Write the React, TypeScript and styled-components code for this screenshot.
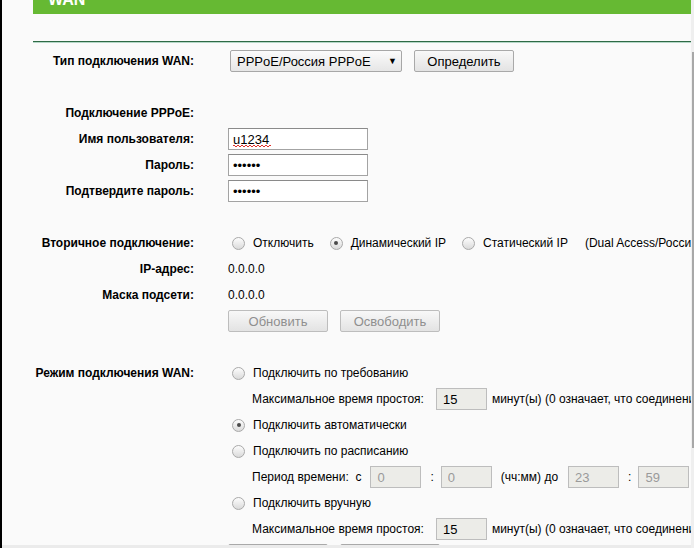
import React from 'react'
import styled, { createGlobalStyle } from 'styled-components'

const GlobalStyle = createGlobalStyle`
  html, body {
    margin: 0;
    padding: 0;
    background: #fafafa;
  }
  body {
    font-family: "Liberation Sans", Arial, sans-serif;
    color: #000;
  }
`

const Frame = styled.div`
  display: flex;
  width: 694px;
  height: 548px;
  overflow: hidden;
  background: #fafafa;
`
const LeftEdge = styled.div`
  width: 2px;
  background: #000;
`
const Main = styled.div`
  flex: 1;
  min-width: 0;
  display: flex;
  flex-direction: column;
`
const Content = styled.div`
  flex: 1;
  min-height: 0;
  overflow: hidden;
  padding-left: 31px;
`
const HScroll = styled.div`
  height: 3px;
  background: #ebebeb;
`
const VScroll = styled.div`
  width: 3px;
  display: flex;
  flex-direction: column;
  background: #efefef;
  padding-top: 52px;
  padding-bottom: 100px;
`
const Thumb = styled.div`
  flex: 1;
  margin-left: 1px;
  background: #a8a8a8;
`
const Header = styled.div`
  height: 14px;
  overflow: hidden;
  background: #66b933;
  padding-left: 15px;
`
const HeaderTitle = styled.div`
  color: #fff;
  font-weight: bold;
  font-size: 16px;
  line-height: 16px;
  margin-top: -8px;
`
const Divider = styled.div`
  margin-top: 27px;
  height: 1px;
  background: #2f6a45;
  border-bottom: 1px solid #b4d7c7;
  margin-bottom: 5px;
`
const Row = styled.div`
  display: grid;
  grid-template-columns: 161px minmax(0, 1fr);
  column-gap: 34px;
  height: 26px;
  align-items: center;
`
const Label = styled.div`
  text-align: right;
  font-weight: bold;
  font-size: 12px;
  white-space: nowrap;
`
const Cell = styled.div<{ $indent?: number }>`
  display: flex;
  align-items: center;
  white-space: nowrap;
  font-size: 12px;
  padding-left: ${p => p.$indent || 0}px;
`
const Option = styled.label<{ $gap?: number }>`
  display: inline-flex;
  align-items: center;
  gap: 8px;
  margin-right: ${p => (p.$gap === undefined ? 16 : p.$gap)}px;
`
const Radio = styled.span<{ $checked?: boolean; $first?: boolean }>`
  display: inline-flex;
  align-items: center;
  justify-content: center;
  box-sizing: border-box;
  width: 13px;
  height: 13px;
  margin-left: ${p => (p.$first ? 4 : 0)}px;
  border-radius: 50%;
  border: 1px solid #a9a9a9;
  background: linear-gradient(#fdfdfd, #dadada);

  &::after {
    content: '';
    display: ${p => (p.$checked ? 'block' : 'none')};
    width: 4px;
    height: 4px;
    border-radius: 50%;
    background: #4a4a4a;
  }
`
const Select = styled.div`
  display: flex;
  align-items: center;
  justify-content: space-between;
  box-sizing: border-box;
  width: 172px;
  height: 22px;
  margin-left: 2px;
  padding: 0 4px 0 6px;
  font-size: 13px;
  border: 1px solid #a7a7a7;
  border-radius: 2px;
  background: linear-gradient(#fbfbfb, #e6e6e6);
`
const Arrow = styled.span`
  font-size: 9px;
`
const Button = styled.button<{ $muted?: boolean }>`
  box-sizing: border-box;
  width: 100px;
  height: 22px;
  padding: 0;
  font-family: "Liberation Sans", Arial, sans-serif;
  font-size: 13px;
  color: ${p => (p.$muted ? '#8f8f8f' : '#000')};
  border: 1px solid ${p => (p.$muted ? '#bdbdbd' : '#a9a9a9')};
  border-radius: 2px;
  background: linear-gradient(#f8f8f8, #e3e3e3);
`
const ButtonGroup = styled.div`
  display: flex;
  gap: 12px;
  align-items: center;
`
// the red dotted zig-zag stands in for the browser's spell-check mark under "u1234"
const TextInput = styled.input<{ $squiggle?: boolean }>`
  box-sizing: border-box;
  width: 140px;
  height: 22px;
  padding: 0 4px;
  font-family: "Liberation Sans", Arial, sans-serif;
  font-size: 13px;
  color: #000;
  border: 1px solid #a3a3a3;
  border-top-color: #8a8a8a;
  outline: none;
  background-color: #fff;
  background-image: ${p =>
    p.$squiggle
      ? 'repeating-linear-gradient(90deg, #e0302a 0 2px, transparent 2px 4px), repeating-linear-gradient(90deg, transparent 0 2px, #e0302a 2px 4px)'
      : 'none'};
  background-repeat: no-repeat;
  background-size: 38px 1px, 38px 1px;
  background-position: 4px 16px, 4px 17px;
`
const SmallInput = styled.input<{ $dim?: boolean }>`
  box-sizing: border-box;
  width: 51px;
  height: 22px;
  padding: 0 6px;
  font-family: "Liberation Sans", Arial, sans-serif;
  font-size: 13px;
  color: ${p => (p.$dim ? '#9a9a9a' : '#000')};
  background: #ecece8;
  border: 1px solid #bdbdbd;
  outline: none;
`
const Sep = styled.span<{ $left: number; $right: number }>`
  margin: 0 ${p => p.$right}px 0 ${p => p.$left}px;
`

const IdleRow = () => (
  <Row>
    <Label />
    <Cell $indent={24}>
      Максимальное время простоя:
      <Sep $left={12} $right={0} />
      <SmallInput defaultValue='15' />
      <Sep $left={5} $right={0} />
      минут(ы) (0 означает, что соединение активно всегда)
    </Cell>
  </Row>
)

export default function App () {
  return (
    <>
      <GlobalStyle />
      <Frame>
        <LeftEdge />
        <Main>
          <Content>
            <Header>
              <HeaderTitle>WAN</HeaderTitle>
            </Header>
            <Divider />

            <Row>
              <Label>Тип подключения WAN:</Label>
              <Cell>
                <Select>
                  <span>PPPoE/Россия PPPoE</span>
                  <Arrow>▼</Arrow>
                </Select>
                <Sep $left={12} $right={0} />
                <Button>Определить</Button>
              </Cell>
            </Row>
            <Row />
            <Row>
              <Label>Подключение PPPoE:</Label>
              <Cell />
            </Row>
            <Row>
              <Label>Имя пользователя:</Label>
              <Cell>
                <TextInput $squiggle defaultValue='u1234' spellCheck={false} />
              </Cell>
            </Row>
            <Row>
              <Label>Пароль:</Label>
              <Cell>
                <TextInput type='password' defaultValue='123456' />
              </Cell>
            </Row>
            <Row>
              <Label>Подтвердите пароль:</Label>
              <Cell>
                <TextInput type='password' defaultValue='123456' />
              </Cell>
            </Row>
            <Row />
            <Row>
              <Label>Вторичное подключение:</Label>
              <Cell>
                <Option>
                  <Radio $first />
                  Отключить
                </Option>
                <Option>
                  <Radio $checked />
                  Динамический IP
                </Option>
                <Option $gap={17}>
                  <Radio />
                  Статический IP
                </Option>
                <span>(Dual Access/Россия PPPoE)</span>
              </Cell>
            </Row>
            <Row>
              <Label>IP-адрес:</Label>
              <Cell>0.0.0.0</Cell>
            </Row>
            <Row>
              <Label>Маска подсети:</Label>
              <Cell>0.0.0.0</Cell>
            </Row>
            <Row>
              <Label />
              <Cell>
                <ButtonGroup>
                  <Button $muted>Обновить</Button>
                  <Button $muted>Освободить</Button>
                </ButtonGroup>
              </Cell>
            </Row>
            <Row />
            <Row>
              <Label>Режим подключения WAN:</Label>
              <Cell>
                <Option>
                  <Radio $first />
                  Подключить по требованию
                </Option>
              </Cell>
            </Row>
            <IdleRow />
            <Row>
              <Label />
              <Cell>
                <Option>
                  <Radio $first $checked />
                  Подключить автоматически
                </Option>
              </Cell>
            </Row>
            <Row>
              <Label />
              <Cell>
                <Option>
                  <Radio $first />
                  Подключить по расписанию
                </Option>
              </Cell>
            </Row>
            <Row>
              <Label />
              <Cell $indent={24}>
                Период времени:&nbsp;&nbsp;с
                <Sep $left={9} $right={0} />
                <SmallInput $dim defaultValue='0' />
                <Sep $left={9} $right={7}>:</Sep>
                <SmallInput $dim defaultValue='0' />
                <Sep $left={9} $right={10}>(чч:мм) до</Sep>
                <SmallInput $dim defaultValue='23' />
                <Sep $left={9} $right={7}>:</Sep>
                <SmallInput $dim defaultValue='59' />
              </Cell>
            </Row>
            <Row>
              <Label />
              <Cell>
                <Option>
                  <Radio $first />
                  Подключить вручную
                </Option>
              </Cell>
            </Row>
            <IdleRow />
            <Row>
              <Label />
              <Cell>
                <ButtonGroup>
                  <Button>Дополнительно</Button>
                  <Button>Сохранить</Button>
                </ButtonGroup>
              </Cell>
            </Row>
          </Content>
          <HScroll />
        </Main>
        <VScroll>
          <Thumb />
        </VScroll>
      </Frame>
    </>
  )
}
